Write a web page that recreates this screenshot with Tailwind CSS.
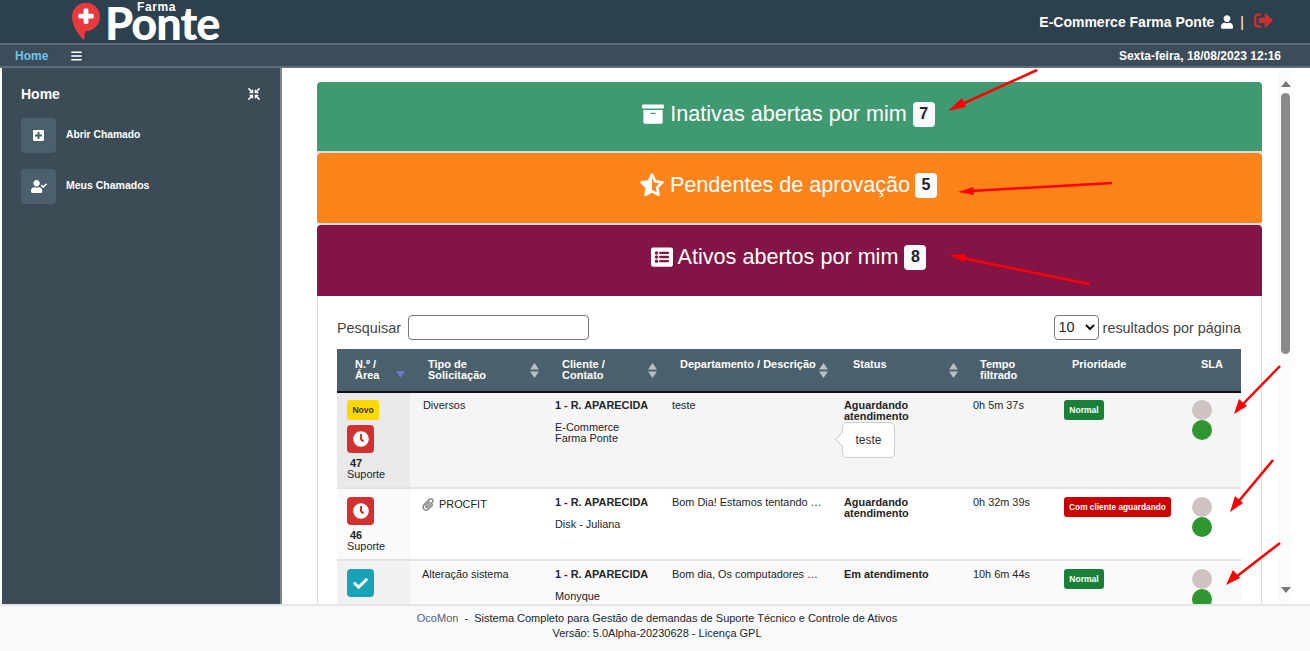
<!DOCTYPE html>
<html lang="pt-BR">
<head>
<meta charset="utf-8">
<title>OcoMon</title>
<script src="https://cdn.jsdelivr.net/npm/@tailwindcss/browser@4"></script>
</head>
<body class="relative h-[651px] w-[1310px] overflow-hidden bg-white font-['Liberation_Sans',Arial,sans-serif] text-[#212529]">

<!-- top bar -->
<header class="flex h-[43px] items-start bg-[#2c404e] pl-[72px] pr-[37px]">
  <div class="flex items-start">
    <svg class="mt-[2px]" width="28" height="39" viewBox="0 0 29 39">
      <path fill="#e8393f" d="M14.500 0C6.500 0 0 6.500 0 14.500c0 9 6 18 12.500 24.500 0.600-3 0.300-6 1.500-9.500 8.500 0 15-7 15-15C29 6.500 22.500 0 14.500 0z"/>
      <path fill="#fff" d="M12 7.500a1.500 1.500 0 0 1 1.500-1.500h2a1.500 1.500 0 0 1 1.500 1.500v4h4a1.500 1.500 0 0 1 1.500 1.500v2a1.500 1.500 0 0 1-1.500 1.500h-4v4a1.500 1.500 0 0 1-1.500 1.500h-2a1.500 1.500 0 0 1-1.500-1.500v-4h-4a1.500 1.500 0 0 1-1.500-1.500v-2a1.500 1.500 0 0 1 1.500-1.500h4z"/>
    </svg>
    <div class="relative ml-[6px] h-[43px] w-[114px]">
      <span class="absolute left-[31px] top-[3px] text-[12px] font-bold leading-[9px] tracking-[0.6px] text-white">Farma</span>
      <span class="absolute left-[-1px] top-[12px] font-['Lato',sans-serif] text-[45px] font-black leading-[22px] tracking-[-1px] text-white">Ponte</span>
    </div>
  </div>
  <div class="ml-auto mt-[14px] flex items-center text-[14px] font-bold leading-[16px] text-white">
    <span>E-Commerce Farma Ponte</span>
    <svg class="ml-[7px]" width="12" height="14" viewBox="0 0 448 512"><path fill="#fff" d="M224 256c70.700 0 128-57.300 128-128S294.700 0 224 0 96 57.300 96 128s57.300 128 128 128zm89.600 32h-16.700c-22.200 10.200-46.900 16-72.900 16s-50.600-5.800-72.900-16h-16.700C60.200 288 0 348.200 0 422.400V464c0 26.500 21.500 48 48 48h352c26.500 0 48-21.500 48-48v-41.600c0-74.200-60.200-134.400-134.400-134.400z"/></svg>
    <span class="ml-[7px] font-normal">|</span>
    <svg class="-mt-[3px] ml-[10px]" width="19" height="19" viewBox="0 0 512 512"><path fill="#c8312f" d="M497 273L329 441c-15 15-41 4.500-41-17v-96H152c-13.300 0-24-10.700-24-24v-96c0-13.300 10.700-24 24-24h136V88c0-21.400 25.900-32 41-17l168 168c9.300 9.400 9.300 24.600 0 34zM192 436v-40c0-6.600-5.400-12-12-12H96c-17.700 0-32-14.300-32-32V160c0-17.700 14.300-32 32-32h84c6.600 0 12-5.400 12-12V76c0-6.600-5.400-12-12-12H96c-53 0-96 43-96 96v192c0 53 43 96 96 96h84c6.600 0 12-5.400 12-12z"/></svg>
  </div>
</header>

<!-- nav bar -->
<nav class="flex h-[25px] items-center border-y-2 border-[#5a6f7c] bg-[#3c4c58] pl-[15px] pr-[29px]">
  <span class="text-[12px] font-bold text-[#6cc5ee]">Home</span>
  <svg class="ml-[23px]" width="11" height="12" viewBox="0 0 448 512"><path fill="#fff" d="M16 132h416c8.837 0 16-7.163 16-16V76c0-8.837-7.163-16-16-16H16C7.163 60 0 67.163 0 76v40c0 8.837 7.163 16 16 16zm0 160h416c8.837 0 16-7.163 16-16v-40c0-8.837-7.163-16-16-16H16c-8.837 0-16 7.163-16 16v40c0 8.837 7.163 16 16 16zm0 160h416c8.837 0 16-7.163 16-16v-40c0-8.837-7.163-16-16-16H16c-8.837 0-16 7.163-16 16v40c0 8.837 7.163 16 16 16z"/></svg>
  <span class="ml-auto text-[12px] font-bold text-white">Sexta-feira, 18/08/2023 12:16</span>
</nav>

<div class="flex h-[536px]">
  <!-- sidebar -->
  <aside class="ml-[2px] w-[280px] shrink-0 border-r-2 border-[#7c868d] bg-[#3c4c57] pl-[19px] pr-[19px] pt-[17px]">
    <div class="flex items-center justify-between">
      <span class="text-[14px] font-bold leading-[18px] text-white">Home</span>
      <svg class="mr-[1px]" width="12" height="12" viewBox="0 0 512 512"><path fill="#fff" d="M200 288H88c-21.400 0-32.100 25.800-17 41l32.900 31-99.200 99.300c-6.200 6.200-6.200 16.400 0 22.600l25.400 25.400c6.200 6.200 16.400 6.200 22.600 0L152 408l31.100 33c15.100 15.100 40.900 4.400 40.900-17V312c0-13.300-10.700-24-24-24zm112-64h112c21.400 0 32.100-25.900 17-41l-33-31 99.300-99.300c6.200-6.200 6.200-16.400 0-22.600L481.900 4.700c-6.200-6.200-16.400-6.200-22.600 0L360 104l-31.100-33C313.800 55.900 288 66.600 288 88v112c0 13.300 10.700 24 24 24zm96 136l33-31.100c15.100-15.100 4.400-40.900-17-40.900H312c-13.300 0-24 10.700-24 24v112c0 21.400 25.900 32.100 41 17l31-32.900 99.300 99.300c6.200 6.200 16.400 6.200 22.600 0l25.400-25.400c6.200-6.200 6.200-16.400 0-22.600L408 360zM183 71.100L152 104 52.700 4.700c-6.200-6.200-16.400-6.200-22.600 0L4.700 30.100c-6.200 6.200-6.200 16.400 0 22.600L104 152l-33 31.100C55.900 198.200 66.600 224 88 224h112c13.300 0 24-10.700 24-24V88c0-21.400-25.900-32-41-16.900z"/></svg>
    </div>
    <div class="mt-[15px] flex items-center gap-[10px]">
      <span class="flex h-[35px] w-[35px] items-center justify-center rounded-[4px] bg-[#4b5f6c]">
        <svg width="11" height="13" viewBox="0 0 448 512"><path fill="#fff" d="M400 32H48C21.500 32 0 53.500 0 80v352c0 26.500 21.500 48 48 48h352c26.500 0 48-21.500 48-48V80c0-26.500-21.500-48-48-48zm-32 252c0 6.600-5.400 12-12 12h-92v92c0 6.600-5.400 12-12 12h-56c-6.600 0-12-5.400-12-12v-92H92c-6.600 0-12-5.400-12-12v-56c0-6.600 5.400-12 12-12h92v-92c0-6.600 5.400-12 12-12h56c6.600 0 12 5.400 12 12v92h92c6.600 0 12 5.400 12 12v56z"/></svg>
      </span>
      <span class="-mt-[2px] text-[10.300px] font-bold text-white">Abrir Chamado</span>
    </div>
    <div class="mt-[16px] flex items-center gap-[10px]">
      <span class="flex h-[35px] w-[35px] items-center justify-center rounded-[4px] bg-[#4b5f6c]">
        <svg width="16" height="13" viewBox="0 0 640 512"><path fill="#fff" d="M224 256c70.700 0 128-57.300 128-128S294.700 0 224 0 96 57.300 96 128s57.300 128 128 128zm89.600 32h-16.700c-22.200 10.200-46.900 16-72.900 16s-50.600-5.800-72.900-16h-16.700C60.200 288 0 348.200 0 422.400V464c0 26.500 21.500 48 48 48h352c26.500 0 48-21.500 48-48v-41.600c0-74.200-60.200-134.400-134.400-134.400zm323-128.400l-27.800-28.100c-4.600-4.700-12.100-4.700-16.800-.1l-104.800 104-45.500-45.800c-4.600-4.700-12.100-4.700-16.800-.1l-28.100 27.900c-4.700 4.600-4.700 12.100-.1 16.800l81.700 82.300c4.600 4.700 12.100 4.700 16.800.1l141.300-140.200c4.600-4.700 4.700-12.200.1-16.800z"/></svg>
      </span>
      <span class="-mt-[2px] text-[10.500px] font-bold text-white">Meus Chamados</span>
    </div>
  </aside>

  <!-- main -->
  <main class="flex min-w-0 flex-1 overflow-hidden">
    <div class="ml-[35px] w-[945px] shrink-0 pt-[14px]">
      <div class="flex h-[71px] justify-center rounded-t-[4px] border-b-2 border-[#dcdcdc] bg-[#3f9a72] pr-[2px] pt-[18px] text-[21.600px] leading-[28px] text-white">
        <span class="flex h-[28px] items-center">
          <svg class="mr-[6px]" width="22" height="22" viewBox="0 0 512 512"><path fill="#fff" d="M32 448c0 17.700 14.300 32 32 32h384c17.700 0 32-14.300 32-32V160H32v288zm160-212c0-6.600 5.400-12 12-12h104c6.600 0 12 5.400 12 12v8c0 6.600-5.400 12-12 12H204c-6.600 0-12-5.400-12-12v-8zM480 32H32C14.300 32 0 46.300 0 64v48c0 8.800 7.200 16 16 16h480c8.800 0 16-7.200 16-16V64c0-17.700-14.300-32-32-32z"/></svg>
          Inativas abertas por mim
          <span class="ml-[6px] flex h-[25px] w-[22px] items-center justify-center rounded-[4px] bg-[#f8f9fa] text-[16px] font-bold text-[#212529]">7</span>
        </span>
      </div>
      <div class="flex h-[72px] justify-center rounded-[4px] border-b-2 border-[#dcdcdc] bg-[#fd841b] pr-[2px] pt-[18px] text-[21.600px] leading-[28px] text-white">
        <span class="flex h-[28px] items-center">
          <svg class="mr-[6px]" width="24" height="24" viewBox="1 1 22 22"><path fill="none" stroke="#fff" stroke-width="2.400" stroke-linejoin="round" d="M12 2.500l2.900 6.200 6.700.9-4.900 4.700 1.200 6.700-5.900-3.300-5.900 3.300 1.200-6.700-4.900-4.700 6.700-.9z"/><path fill="#fff" d="M12 2.500l-2.900 6.200-6.700.9 4.900 4.700-1.200 6.700 5.900-3.300z"/></svg>
          Pendentes de aprovação
          <span class="ml-[5px] flex h-[25px] w-[22px] items-center justify-center rounded-[4px] bg-[#f8f9fa] text-[16px] font-bold text-[#212529]">5</span>
        </span>
      </div>
      <div class="flex h-[71px] justify-center rounded-t-[4px] bg-[#831446] pr-[2px] pt-[18px] text-[21.600px] leading-[28px] text-white">
        <span class="flex h-[28px] items-center">
          <svg class="mr-[5px]" width="22" height="22" viewBox="0 0 512 512"><path fill="#fff" d="M464 480H48c-26.510 0-48-21.490-48-48V80c0-26.510 21.490-48 48-48h416c26.510 0 48 21.490 48 48v352c0 26.510-21.490 48-48 48zM128 120c-22.091 0-40 17.909-40 40s17.909 40 40 40 40-17.909 40-40-17.909-40-40-40zm0 96c-22.091 0-40 17.909-40 40s17.909 40 40 40 40-17.909 40-40-17.909-40-40-40zm0 96c-22.091 0-40 17.909-40 40s17.909 40 40 40 40-17.909 40-40-17.909-40-40-40zm288-136v-32c0-6.627-5.373-12-12-12H204c-6.627 0-12 5.373-12 12v32c0 6.627 5.373 12 12 12h200c6.627 0 12-5.373 12-12zm0 96v-32c0-6.627-5.373-12-12-12H204c-6.627 0-12 5.373-12 12v32c0 6.627 5.373 12 12 12h200c6.627 0 12-5.373 12-12zm0 96v-32c0-6.627-5.373-12-12-12H204c-6.627 0-12 5.373-12 12v32c0 6.627 5.373 12 12 12h200c6.627 0 12-5.373 12-12z"/></svg>
          Ativos abertos por mim
          <span class="ml-[6px] flex h-[25px] w-[22px] items-center justify-center rounded-[4px] bg-[#f8f9fa] text-[16px] font-bold text-[#212529]">8</span>
        </span>
      </div>

      <div class="h-[400px] border-x border-[#dcdcdc] pl-[19px] pr-[20px] pt-[19px]">
        <div class="flex h-[25px] items-center justify-between text-[14.400px] text-[#444]">
          <label class="flex items-center"><span class="mt-[2px]">Pesquisar</span>
            <span class="ml-[7px] h-[25px] w-[181px] rounded-[4px] border border-[#767676] bg-white"></span>
          </label>
          <div class="flex items-center">
            <span class="flex h-[25px] w-[45px] items-center justify-between rounded-[4px] border border-[#767676] pl-[4px] pr-[3px] text-[14.400px] text-[#212529]">10
              <svg width="10" height="7" viewBox="0 0 10 7"><path fill="none" stroke="#111" stroke-width="2" d="M1 1l4 4 4-4"/></svg>
            </span>
            <span class="ml-[4px] mt-[2px]">resultados por página</span>
          </div>
        </div>

        <table class="relative mt-[9px] w-[904px] table-fixed border-collapse text-[10.900px] leading-[11px]">
          <colgroup>
            <col class="w-[73px]"><col class="w-[132px]"><col class="w-[117px]"><col class="w-[172px]"><col class="w-[129px]"><col class="w-[91px]"><col class="w-[128px]"><col class="w-[62px]">
          </colgroup>
          <thead>
            <tr class="h-[43px] border-b-2 border-[#111] bg-[#4b606d] text-left align-top text-[11px] font-bold text-white">
              <th class="relative pl-[18px] pt-[10px]">N.º /<br>Área
                <svg class="absolute left-[59px] top-[22px]" width="9" height="7" viewBox="0 0 9 7"><path fill="#7078c8" d="M0 0h9L4.500 7z"/></svg>
              </th>
              <th class="relative pl-[18px] pt-[10px]">Tipo de<br>Solicitação
                <svg class="absolute left-[120px] top-[14px]" width="9" height="15" viewBox="0 0 9 15"><path fill="#b8c0c6" d="M4.500 0L9 6.500H0zM0 8.500h9L4.500 15z"/></svg>
              </th>
              <th class="relative pl-[20px] pt-[10px]">Cliente /<br>Contato
                <svg class="absolute left-[106px] top-[14px]" width="9" height="15" viewBox="0 0 9 15"><path fill="#b8c0c6" d="M4.500 0L9 6.500H0zM0 8.500h9L4.500 15z"/></svg>
              </th>
              <th class="relative whitespace-nowrap pl-[21px] pt-[10px]">Departamento / Descrição
                <svg class="absolute left-[160px] top-[14px]" width="9" height="15" viewBox="0 0 9 15"><path fill="#b8c0c6" d="M4.500 0L9 6.500H0zM0 8.500h9L4.500 15z"/></svg>
              </th>
              <th class="relative pl-[22px] pt-[10px]">Status
                <svg class="absolute left-[118px] top-[14px]" width="9" height="15" viewBox="0 0 9 15"><path fill="#b8c0c6" d="M4.500 0L9 6.500H0zM0 8.500h9L4.500 15z"/></svg>
              </th>
              <th class="pl-[20px] pt-[10px]">Tempo<br>filtrado</th>
              <th class="pl-[21px] pt-[10px]">Prioridade</th>
              <th class="pl-[22px] pt-[10px]">SLA</th>
            </tr>
          </thead>
          <tbody class="align-top text-[#212529]">
            <tr class="h-[96px] border-b-2 border-[#e3e3e3] bg-[#f5f5f5]">
              <td class="bg-[#e9e9e9] pl-[10px] pt-[7px]">
                <span class="flex h-[20px] w-[32px] items-center justify-center rounded-[3px] bg-[#ffd800] text-[8.500px] font-bold text-[#333]">Novo</span>
                <span class="mt-[5px] flex h-[28px] w-[27px] items-center justify-center rounded-[4px] bg-[#d33030]">
                  <svg width="16" height="16" viewBox="0 0 512 512"><path fill="#fff" d="M256,8C119,8,8,119,8,256S119,504,256,504,504,393,504,256,393,8,256,8Zm92.490,313h0l-20,25a16,16,0,0,1-22.490,2.500h0l-67-49.720a40,40,0,0,1-15-31.230V112a16,16,0,0,1,16-16h32a16,16,0,0,1,16,16V256l58,42.500A16,16,0,0,1,348.490,321Z"/></svg>
                </span>
                <div class="mt-[5px] pl-[3px] font-bold">47</div>
                <div>Suporte</div>
              </td>
              <td class="pl-[13px] pt-[7px]">Diversos</td>
              <td class="pl-[13px] pt-[7px]"><b>1 - R. APARECIDA</b><div class="mt-[11px]">E-Commerce<br>Farma Ponte</div></td>
              <td class="pl-[13px] pt-[7px]">teste</td>
              <td class="pl-[13px] pt-[7px] font-bold">Aguardando<br>atendimento</td>
              <td class="pl-[13px] pt-[7px]">0h 5m 37s</td>
              <td class="pl-[13px] pt-[7px]"><span class="flex h-[20px] w-[40px] items-center justify-center rounded-[3px] bg-[#198038] text-[8.500px] font-bold text-white">Normal</span></td>
              <td class="pl-[13px] pt-[7px]"><span class="block h-[20px] w-[20px] rounded-full bg-[#cfc2c2]"></span><span class="block h-[20px] w-[20px] rounded-full bg-[#2f962f]"></span></td>
            </tr>
            <tr class="h-[72px] border-b-2 border-[#e3e3e3] bg-white">
              <td class="bg-[#fafafa] pl-[10px] pt-[8px]">
                <span class="flex h-[28px] w-[27px] items-center justify-center rounded-[4px] bg-[#d33030]">
                  <svg width="16" height="16" viewBox="0 0 512 512"><path fill="#fff" d="M256,8C119,8,8,119,8,256S119,504,256,504,504,393,504,256,393,8,256,8Zm92.490,313h0l-20,25a16,16,0,0,1-22.490,2.500h0l-67-49.720a40,40,0,0,1-15-31.230V112a16,16,0,0,1,16-16h32a16,16,0,0,1,16,16V256l58,42.500A16,16,0,0,1,348.490,321Z"/></svg>
                </span>
                <div class="mt-[5px] pl-[3px] font-bold">46</div>
                <div>Suporte</div>
              </td>
              <td class="pl-[12px] pt-[9px]"><span class="flex items-center"><svg class="mr-[5px]" width="12" height="13" viewBox="0 0 448 512"><path fill="#8d8d8d" d="M43.246 466.142c-58.430-60.289-57.341-157.511 1.386-217.581L254.392 34c44.316-45.332 116.351-45.336 160.671 0 43.890 44.894 43.943 117.329 0 162.276L232.214 383.128c-29.855 30.537-78.633 30.111-107.982-.998-28.275-29.970-27.368-77.473 1.452-106.953l143.743-146.835c6.182-6.314 16.312-6.422 22.626-.241l22.861 22.379c6.315 6.182 6.422 16.312.241 22.626L171.427 319.927c-4.932 5.045-5.236 13.428-.648 18.292 4.372 4.634 11.245 4.711 15.688.165l182.849-186.851c19.613-20.062 19.613-52.725-.011-72.798-19.189-19.627-49.957-19.637-69.154 0L90.390 293.295c-34.763 35.560-35.299 93.120-1.191 128.313 34.010 35.093 88.985 35.137 123.058.286l172.060-175.999c6.177-6.319 16.307-6.433 22.626-.256l22.877 22.364c6.319 6.177 6.434 16.307.256 22.626l-172.060 175.998c-59.576 60.938-155.943 60.216-214.770-.485z"/></svg><span>PROCFIT</span></span></td>
              <td class="pl-[13px] pt-[8px]"><b>1 - R. APARECIDA</b><div class="mt-[11px]">Disk - Juliana</div></td>
              <td class="pl-[13px] pt-[8px]">Bom Dia! Estamos tentando …</td>
              <td class="pl-[13px] pt-[8px] font-bold">Aguardando<br>atendimento</td>
              <td class="pl-[13px] pt-[8px]">0h 32m 39s</td>
              <td class="pl-[13px] pt-[8px]"><span class="flex h-[20px] w-[107px] items-center justify-center rounded-[3px] bg-[#cc0000] text-[8.300px] font-bold text-white">Com cliente aguardando</span></td>
              <td class="pl-[13px] pt-[8px]"><span class="block h-[20px] w-[20px] rounded-full bg-[#cfc2c2]"></span><span class="block h-[20px] w-[20px] rounded-full bg-[#2f962f]"></span></td>
            </tr>
            <tr class="h-[72px] bg-[#f9f9f9]">
              <td class="bg-[#f1f1f1] pl-[10px] pt-[8px]">
                <span class="flex h-[28px] w-[27px] items-center justify-center rounded-[4px] bg-[#17a2b8]">
                  <svg width="15" height="15" viewBox="0 0 512 512"><path fill="#fff" d="M173.898 439.404l-166.400-166.400c-9.997-9.997-9.997-26.206 0-36.204l36.203-36.204c9.997-9.998 26.207-9.998 36.204 0L192 312.690 432.095 72.596c9.997-9.997 26.207-9.997 36.204 0l36.203 36.204c9.997 9.997 9.997 26.206 0 36.204l-294.400 294.401c-9.998 9.997-26.207 9.997-36.204-.001z"/></svg>
                </span>
              </td>
              <td class="pl-[12px] pt-[8px]">Alteração sistema</td>
              <td class="pl-[13px] pt-[8px]"><b>1 - R. APARECIDA</b><div class="mt-[11px]">Monyque</div></td>
              <td class="pl-[13px] pt-[8px]">Bom dia, Os computadores …</td>
              <td class="pl-[13px] pt-[8px] font-bold">Em atendimento</td>
              <td class="pl-[13px] pt-[8px]">10h 6m 44s</td>
              <td class="pl-[13px] pt-[8px]"><span class="flex h-[20px] w-[40px] items-center justify-center rounded-[3px] bg-[#198038] text-[8.500px] font-bold text-white">Normal</span></td>
              <td class="pl-[13px] pt-[8px]"><span class="block h-[20px] w-[20px] rounded-full bg-[#cfc2c2]"></span><span class="block h-[20px] w-[20px] rounded-full bg-[#2f962f]"></span></td>
            </tr>
          </tbody>
        </table>
      </div>
    </div>

    <!-- scrollbar -->
    <div class="ml-[16px] flex w-[15px] shrink-0 flex-col items-center bg-[#fcfcfc] pt-[13px]">
      <svg width="10" height="6" viewBox="0 0 10 6"><path fill="#777" d="M5 0l5 6H0z"/></svg>
      <div class="mt-[6px] h-[261px] w-[9px] rounded-full bg-[#8a8a8a]"></div>
      <svg class="mt-[233px]" width="10" height="6" viewBox="0 0 10 6"><path fill="#777" d="M0 0h10L5 6z"/></svg>
    </div>
  </main>
</div>

<!-- footer -->
<footer class="h-[47px] border-t-2 border-[#e3e5e8] bg-[#f8f9fa] pt-[5px] text-center text-[11px] leading-[15px] text-[#212529]">
  <div class="pl-[4px]"><span class="text-[#5a5a78]">OcoMon</span>&nbsp; - &nbsp;Sistema Completo para Gestão de demandas de Suporte Técnico e Controle de Ativos</div>
  <div class="pl-[4px]">Versão: 5.0Alpha-20230628 - Licença GPL</div>
</footer>

<!-- tooltip over the table -->
<div class="absolute left-[842px] top-[422px] flex h-[36px] w-[53px] items-center justify-center rounded-[5px] border border-[#cfcfcf] bg-white text-[12px] text-[#333]">
  teste
  <span class="absolute left-[-6px] top-[11px] h-[11px] w-[11px] rotate-45 border-b border-l border-[#cfcfcf] bg-white"></span>
</div>

<!-- annotation arrows -->
<svg class="pointer-events-none absolute left-0 top-0" width="1310" height="651" viewBox="0 0 1310 651">
  <g stroke="#f00" stroke-width="2.500" fill="#f00">
    <line x1="1037" y1="70" x2="960" y2="105"/>
    <line x1="1112" y1="183" x2="970" y2="191"/>
    <line x1="1089" y1="284" x2="962" y2="258"/>
    <line x1="1280" y1="366" x2="1242" y2="405"/>
    <line x1="1273" y1="460" x2="1238" y2="502"/>
    <line x1="1280" y1="543" x2="1236" y2="577"/>
  </g>
  <g fill="#f00">
    <path d="M948 111l14-13 4 9z"/>
    <path d="M958 192l15-5 1 8z"/>
    <path d="M949 255l17-1-2 8z"/>
    <path d="M1234 414l5-15 8 7z"/>
    <path d="M1230 512l5-16 8 7z"/>
    <path d="M1226 585l7-15 7 8z"/>
  </g>
</svg>
</body>
</html>
